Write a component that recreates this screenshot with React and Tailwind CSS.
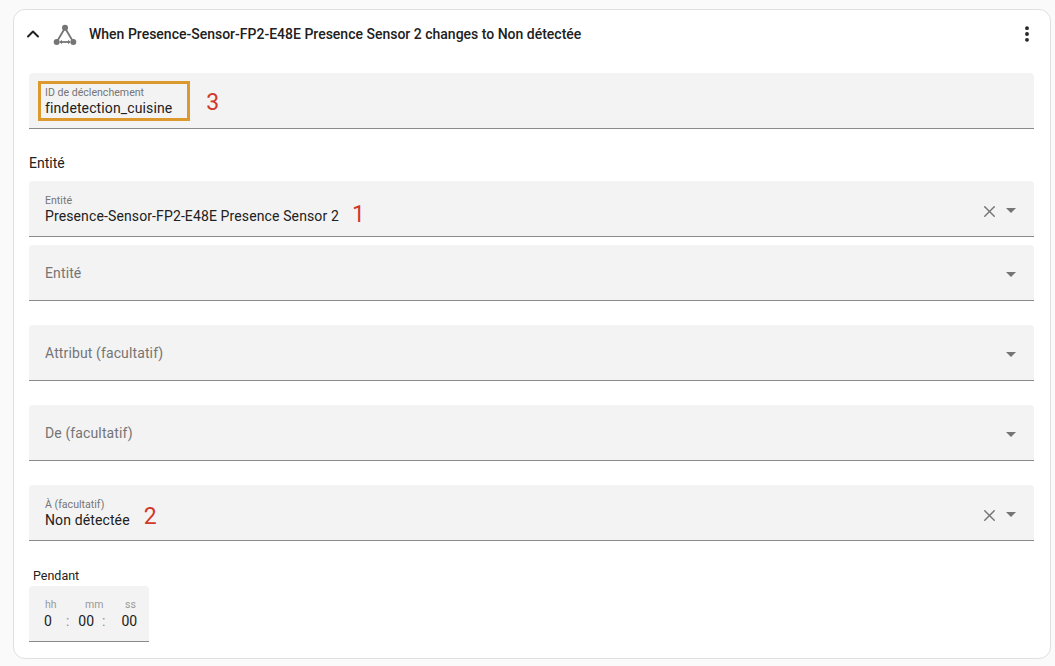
import { ChevronUp, EllipsisVertical, X } from 'lucide-react';

const Caret = () => (
    <svg width="10" height="5" viewBox="0 0 10 5" className="fill-[#757575] mt-1">
        <path d="M0 0 L10 0 L5 5 Z" />
    </svg>
);

const Field = ({ label, value, note, noteClass = '', clearable, noArrow, className = '' }) => (
    <div className={`h-14 bg-[#f3f3f3] border-b border-[#8a8a8a] rounded-t flex items-center pl-4 pr-[18px] ${className}`}>
        <div className="flex-1 flex items-end">
            {value ? (
                <div className="flex flex-col pt-[3px]">
                    <span className="text-[10.6px] leading-3 text-[#757575]">{label}</span>
                    <span className="text-[14px] leading-[18px] tracking-[0.12px] text-[#212121]">{value}</span>
                </div>
            ) : (
                <span className="text-[14px] leading-5 tracking-[0.12px] text-[#757575]">{label}</span>
            )}
            {note && <span className={`text-[23px] leading-7 text-[#d2382b] ${noteClass}`}>{note}</span>}
        </div>
        {clearable && <X size={19} strokeWidth={1.8} className="text-[#757575] mr-[7px] mt-[5px]" />}
        {!noArrow && <Caret />}
    </div>
);

const TriggerIcon = () => (
    <svg width="24" height="24" viewBox="0 0 24 24" fill="none" className="ml-2.5 text-[#757575]">
        <g stroke="currentColor" strokeWidth="1.8">
            <path d="M12 6 L3.7 20" />
            <path d="M12 6 L20.3 20" />
            <path d="M7 20 H17" />
        </g>
        <path d="M9 17.8 L6.6 20 L9 22.2 Z M15 17.8 L17.4 20 L15 22.2 Z" fill="currentColor" />
        <circle cx="12" cy="5.7" r="3" fill="currentColor" />
        <circle cx="3.7" cy="20" r="3" fill="currentColor" />
        <circle cx="20.3" cy="20" r="3" fill="currentColor" />
    </svg>
);

export default function App() {
    return (
        <div className="w-[1055px] h-[666px] overflow-hidden bg-[#fafafa] pt-[9px] pl-[13px] font-['Roboto',sans-serif]">
            <div className="w-[1038px] h-[650px] bg-white border border-[#e0e0e0] rounded-xl">
                <div className="h-12 flex items-center pl-[9px] pr-[13px]">
                    <ChevronUp size={20} strokeWidth={2.4} className="text-[#212121]" />
                    <TriggerIcon />
                    <span className="ml-[12px] text-[14px] font-medium text-[#212121]">
                        When Presence-Sensor-FP2-E48E Presence Sensor 2 changes to Non détectée
                    </span>
                    <EllipsisVertical size={20} strokeWidth={2.6} className="ml-auto text-[#212121]" />
                </div>

                <div className="pl-[15px] pr-[16px] pt-[15px]">
                    <div className="relative">
                        <Field label="ID de déclenchement" value="findetection_cuisine" note="3" noArrow noteClass="ml-[34px]" />
                        <div className="absolute left-[9px] top-2 w-[152px] h-10 border-[3px] border-[#dc9a2e]" />
                    </div>

                    <div className="text-[14px] leading-[18px] text-[#212121] mt-[25px] mb-[9px]">Entité</div>

                    <Field label="Entité" value="Presence-Sensor-FP2-E48E Presence Sensor 2" note="1" noteClass="ml-[13px] -mb-[4px]" clearable />
                    <Field label="Entité" className="mt-2" />
                    <Field label="Attribut (facultatif)" className="mt-6" />
                    <Field label="De (facultatif)" className="mt-6" />
                    <Field label="À (facultatif)" value="Non détectée" note="2" noteClass="ml-[14px] -mb-[2px]" clearable className="mt-6" />

                    <div className="text-[12.5px] leading-4 text-[#212121] mt-[27px] ml-1">Pendant</div>
                    <div className="w-[120px] h-14 mt-0.5 bg-[#f3f3f3] border-b border-[#8a8a8a] rounded-t pt-[13px]">
                        <div className="flex pl-4 text-[10.5px] leading-3 text-[#9a9a9a]">
                            <span className="w-10">hh</span>
                            <span className="w-10">mm</span>
                            <span>ss</span>
                        </div>
                        <div className="flex pl-[15px] mt-[1px] text-[14px] leading-[18px] text-[#212121]">
                            <span>0</span>
                            <span className="ml-[14px] text-[#8f8f8f]">:</span>
                            <span className="ml-[9px]">00</span>
                            <span className="ml-2 text-[#8f8f8f]">:</span>
                            <span className="ml-4">00</span>
                        </div>
                    </div>
                </div>
            </div>
        </div>
    );
}
